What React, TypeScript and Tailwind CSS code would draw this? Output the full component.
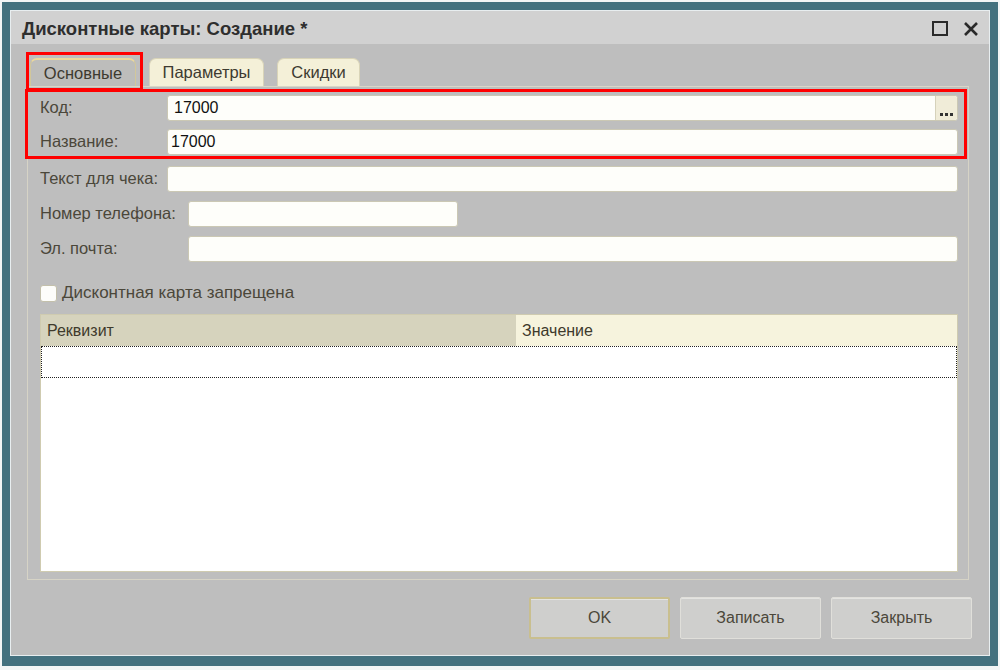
import { useState } from "react"

const font = { fontFamily: '"Liberation Sans", Arial, sans-serif' }

const Field = ({ label, labelW, value, inputW, dots, padL }: { label: string, labelW: string, value?: string, inputW?: string, dots?: boolean, padL?: string }) => (
    <div className="flex items-center h-[25px]">
        <div className={`${labelW} shrink-0 text-[16.5px] text-[#4b473a]`}>{label}</div>
        <div className={`${inputW ?? 'flex-1'} h-[26px] flex bg-[#fefefa] border border-[#cbc8b4] rounded-[3px]`}>
            <div className={`flex-1 ${padL ?? 'pl-[6px]'} text-[16px] leading-[24px] text-[#111]`}>{value}</div>
            {dots && (
                <div className="w-[22px] h-full bg-[#f0ecd8] border-l border-[#d6d2bb] rounded-r-[3px] flex items-end justify-center pb-[4px] gap-[2px]">
                    <span className="w-[3px] h-[3px] bg-[#333]" />
                    <span className="w-[3px] h-[3px] bg-[#333]" />
                    <span className="w-[3px] h-[3px] bg-[#333]" />
                </div>
            )}
        </div>
    </div>
)

const Tab = ({ text, w, active }: { text: string, w: string, active?: boolean }) => (
    <div className={`relative ${w} h-[28px] rounded-t-[7px] border border-b-0 flex items-center justify-center text-[16.5px] text-[#3d3a30] ${active ? 'bg-[#bdbdbb] border-[#d2c79a] border-t-[2px] border-t-[#ecd89c]' : 'bg-[#f4f0d8] border-[#d9d4b8]'}`}>
        {text}
        {active && <div className="absolute -left-[5px] -top-[8px] w-[117px] h-[39px] border-[3px] border-[#ff0000]" />}
    </div>
)

const Button = ({ text, w, def }: { text: string, w: string, def?: boolean }) => (
    <div className={`${w} h-[42px] flex items-center justify-center text-[16px] text-[#4b473a] bg-[#cfcfcd] rounded-[2px] border ${def ? 'border-2 border-[#c9bf8f]' : 'border-[#e0dfda]'} shadow-[inset_0_1px_0_#e4e4e2]`}>
        {text}
    </div>
)

export default function App() {
    const [checked, setChecked] = useState(false)

    return (
        <div className="w-[1000px] h-[670px] bg-[#f3f5f6] pt-[2px] pl-[2px]" style={font}>
            <div className="w-[996px] h-[664px] bg-[#44717f] pt-[8px] pl-[8px] pr-[8px] pb-[10px]">
                <div className="w-full h-full border-[1px] border-[#e8eef0] flex flex-col bg-[#bebebe]">
                    <div className="h-[33px] shrink-0 bg-[#d1d1d1] flex items-center pl-[11px] pr-[10px]">
                        <div className="flex-1 text-[18.5px] font-bold text-[#2e2e2e] pt-[2px]">Дисконтные карты: Создание *</div>
                        <div className="flex items-center gap-[15px] pt-[2px]">
                            <div className="w-[16px] h-[15px] border-2 border-[#2a2a2a]" />
                            <svg width="16" height="16" viewBox="0 0 16 16">
                                <path d="M2 2 L14 14 M14 2 L2 14" stroke="#2a2a2a" strokeWidth="2.6" />
                            </svg>
                        </div>
                    </div>
                    <div className="flex-1 flex flex-col pl-[16px] pr-[17px] pt-[13px] pb-[16px]">
                        <div className="flex gap-[13px] pl-[3px] h-[29px] items-end">
                            <Tab text="Основные" w="w-[106px]" active />
                            <Tab text="Параметры" w="w-[115px]" />
                            <Tab text="Скидки" w="w-[83px]" />
                        </div>
                        <div className="w-[942px] h-[494px] border border-[#d6d3c6] border-t-[#d9d6c6] flex flex-col pl-[12px] pr-[10px] pt-[2px]">
                            <div className="-ml-[15px] w-[942px] border-[3px] border-[#ff0000] flex flex-col gap-[9px] pl-[12px] pr-[6px] pt-[3px] pb-[2px]">
                                <Field label="Код:" labelW="w-[127px]" value="17000" dots />
                                <Field label="Название:" labelW="w-[127px]" value="17000" padL="pl-[3px]" />
                            </div>
                            <div className="flex flex-col gap-[10px] mt-[7px]">
                                <Field label="Текст для чека:" labelW="w-[127px]" />
                                <Field label="Номер телефона:" labelW="w-[148px]" inputW="w-[270px]" />
                                <Field label="Эл. почта:" labelW="w-[148px]" />
                            </div>
                            <label className="flex items-center gap-[5px] mt-[23px] h-[18px] text-[17px] text-[#4b473a]">
                                <input type="checkbox" checked={checked} onChange={() => setChecked(!checked)} className="appearance-none w-[17px] h-[17px] bg-[#fdfdfa] border border-[#c3c0ab] rounded-[3px]" />
                                Дисконтная карта запрещена
                            </label>
                            <div className="mt-[12px] w-[918px] h-[258px] bg-white border border-[#cfcbb0] flex flex-col">
                                <div className="flex h-[31px] shrink-0 text-[16px] text-[#3e3a2c]">
                                    <div className="w-[475px] bg-[#d6d3bd] pl-[6px] flex items-center">Реквизит</div>
                                    <div className="flex-1 bg-[#f6f3dd] pl-[6px] flex items-center">Значение</div>
                                </div>
                                <div className="h-[32px] border border-dotted border-[#222]" />
                            </div>
                        </div>
                        <div className="flex-1" />
                        <div className="flex justify-end gap-[10px] pr-0">
                            <Button text="OK" w="w-[141px]" def />
                            <Button text="Записать" w="w-[141px]" />
                            <Button text="Закрыть" w="w-[141px]" />
                        </div>
                    </div>
                </div>
            </div>
        </div>
    )
}
